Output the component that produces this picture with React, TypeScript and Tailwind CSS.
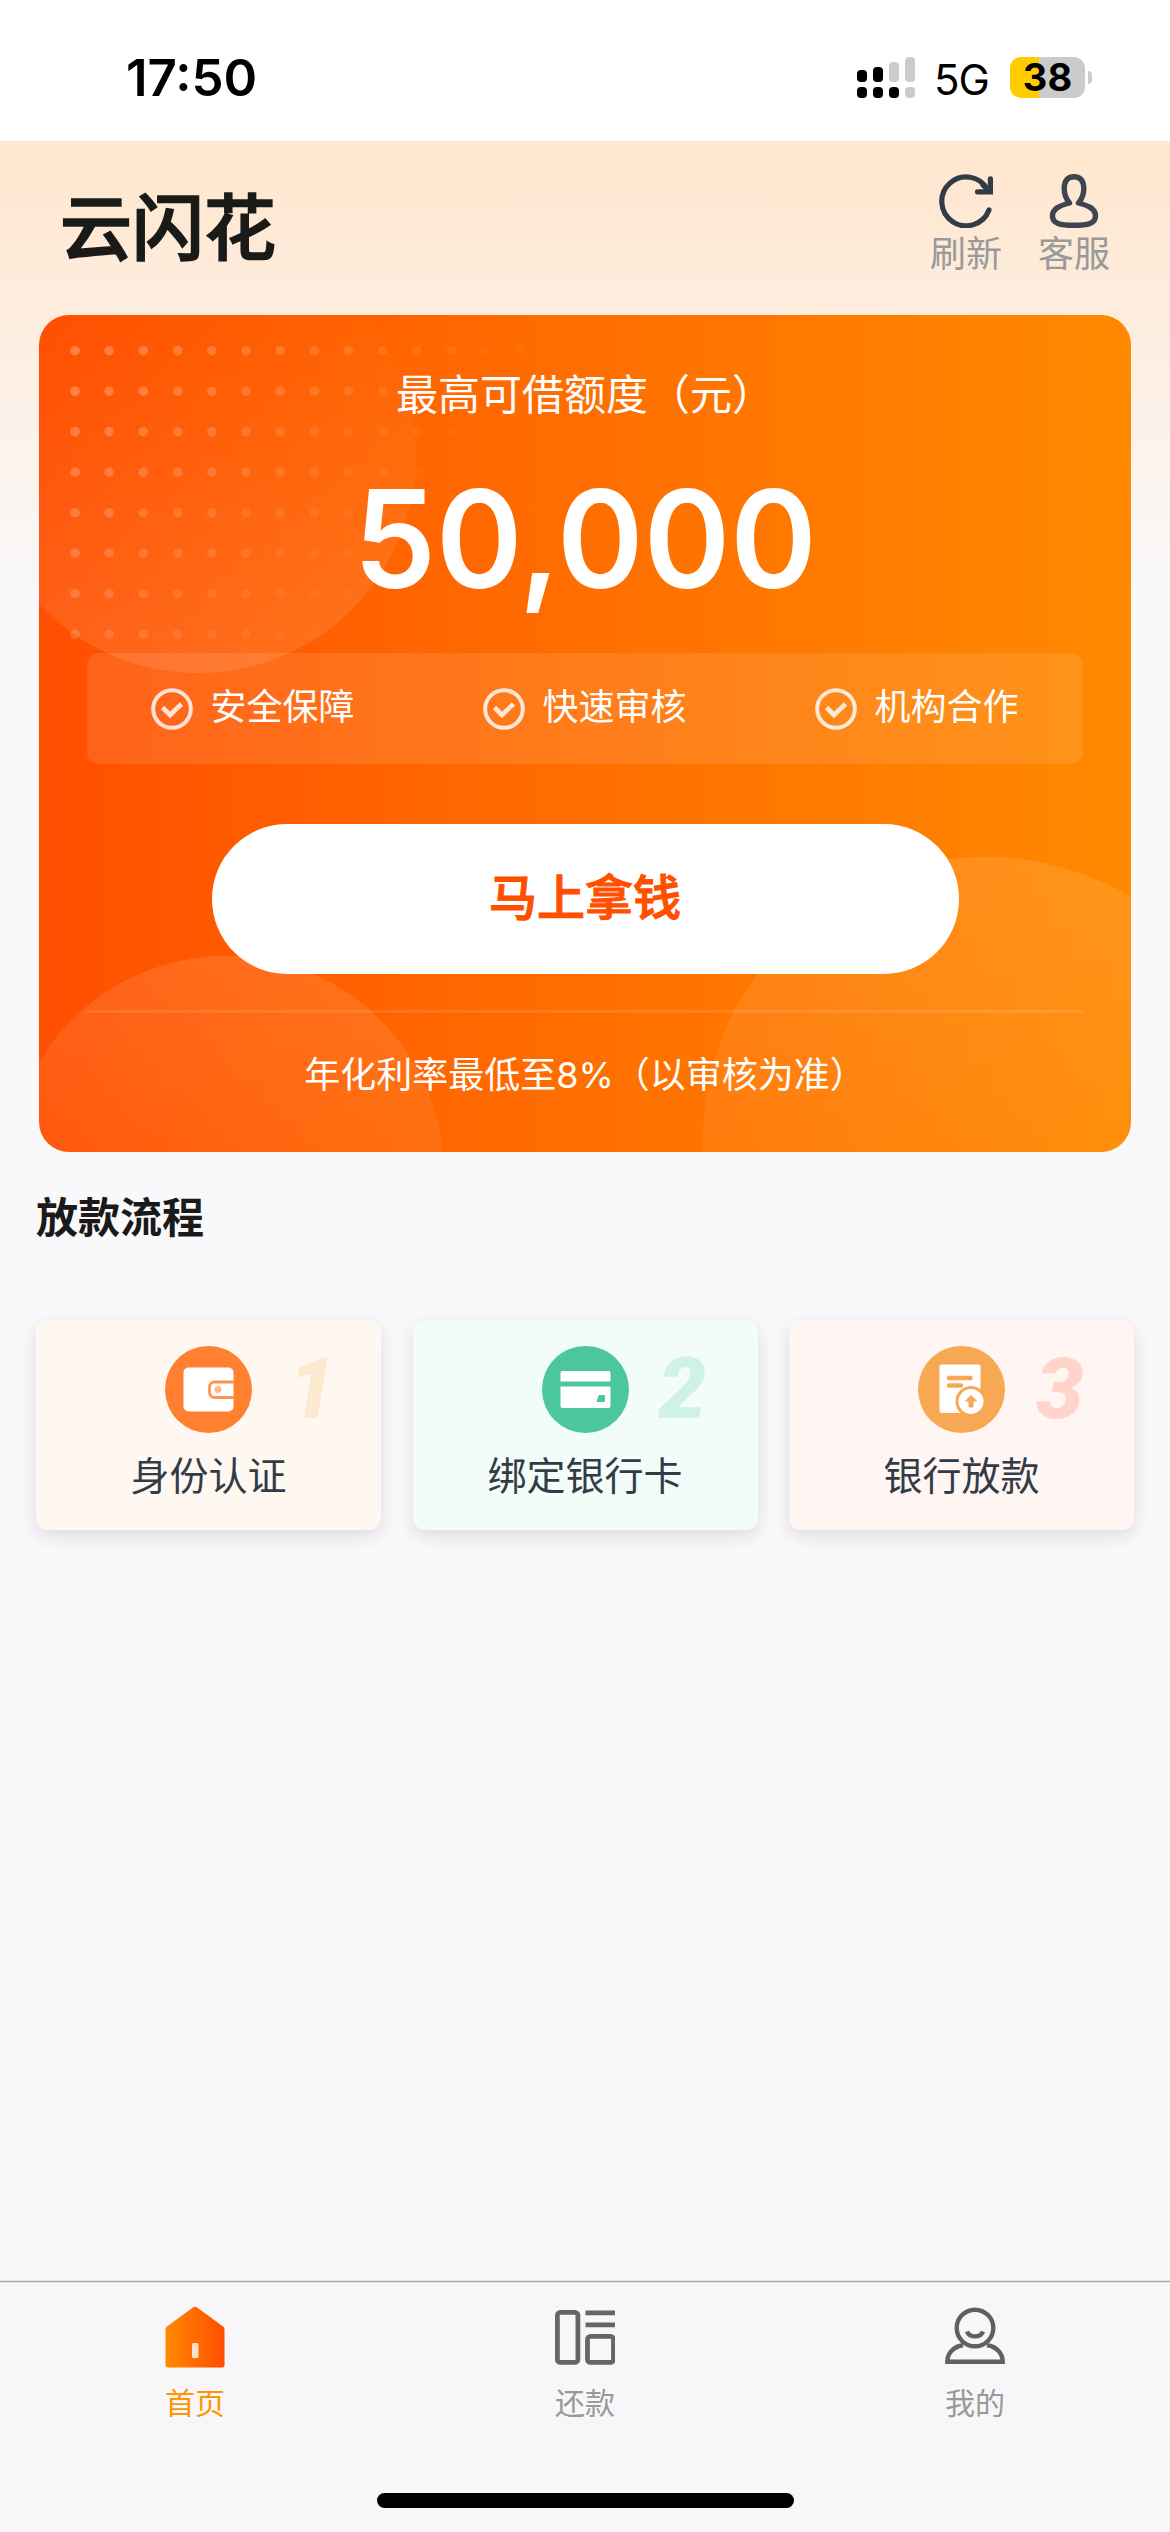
import type { ComponentType } from "react";

interface IconProps {
    className?: string;
}

function SignalIcon({ className }: IconProps) {
    return (
        <svg viewBox="0 0 58 41" className={className}>
            <g fill="#000">
                <rect x="0" y="13" width="10" height="12" rx="4" />
                <rect x="16" y="10" width="10" height="15" rx="4" />
                <rect x="0" y="30" width="10" height="11" rx="4" />
                <rect x="16" y="30" width="10" height="11" rx="4" />
                <rect x="32" y="30" width="10" height="11" rx="4" />
            </g>
            <g fill="#cbcbcb">
                <rect x="32" y="5" width="10" height="20" rx="4" />
                <rect x="48" y="0" width="10" height="25" rx="4" />
                <rect x="48" y="30" width="10" height="11" rx="4" />
            </g>
        </svg>
    );
}

function RefreshIcon({ className }: IconProps) {
    return (
        <svg viewBox="0 0 54 54" fill="none" stroke="#323c47" strokeWidth="5.2" strokeLinecap="round" className={className}>
            <path d="M50 36A24.4 24.4 0 1 1 48.5 15.5" />
            <path d="M38.5 17.8H51.4V4.8" />
            <path d="M44 11l7 6.500" />
        </svg>
    );
}

function ServiceIcon({ className }: IconProps) {
    return (
        <svg viewBox="0 0 54 54" fill="none" stroke="#3d4650" strokeWidth="5.4" strokeLinejoin="round" className={className}>
            <path d="M22.500 29C19 25 17.200 20 17.200 14.500C17.200 7 20.500 2.700 27 2.700C33.500 2.700 36.800 7 36.800 14.500C36.800 20 35 25 31.500 29C41 31.500 48.500 34.500 48.500 42C48.500 49.500 41 51.300 27 51.300C13 51.300 5.500 49.500 5.500 42C5.500 34.500 13 31.500 22.500 29Z" />
        </svg>
    );
}

function CheckIcon({ className }: IconProps) {
    return (
        <svg viewBox="0 0 42 42" fill="none" stroke="#fff" strokeOpacity="0.82" className={className}>
            <circle cx="21" cy="21" r="18.8" strokeWidth="4" />
            <path d="M11.500 19.500l7.500 7.500L30.500 16" strokeWidth="4.6" />
        </svg>
    );
}

function WalletIcon({ className }: IconProps) {
    return (
        <svg viewBox="0 0 87 87" className={className}>
            <circle cx="43.5" cy="43.5" r="43.5" fill="#ff8030" />
            <rect x="18.500" y="21.500" width="50" height="44" rx="5" fill="#fff" />
            <path d="M69 36H49.500a5 5 0 0 0-5 5v5.500a5 5 0 0 0 5 5H69" fill="none" stroke="#ff9350" strokeWidth="2.800" />
            <circle cx="53" cy="43.500" r="3.500" fill="#ffb78b" />
        </svg>
    );
}

function BankCardIcon({ className }: IconProps) {
    return (
        <svg viewBox="0 0 87 87" className={className}>
            <circle cx="43.5" cy="43.5" r="43.5" fill="#4bc69e" />
            <path d="M20.500 25h46a2 2 0 0 1 2 2v8.500h-50V27a2 2 0 0 1 2-2z" fill="#fff" />
            <path d="M18.500 40.500h50V60a2 2 0 0 1-2 2h-46a2 2 0 0 1-2-2z" fill="#fff" />
            <path d="M57 49.500H62.500V55.500H55z" fill="#4bc69e" stroke="#4bc69e" strokeLinejoin="round" />
        </svg>
    );
}

function LoanIcon({ className }: IconProps) {
    return (
        <svg viewBox="0 0 87 87" className={className}>
            <circle cx="43.5" cy="43.5" r="43.5" fill="#f6a952" />
            <rect x="21.500" y="18.500" width="41" height="48.500" rx="2" fill="#fff" />
            <path d="M31 32h21.500M31 39.500h12" stroke="#f6a952" strokeWidth="4.500" strokeLinecap="round" />
            <circle cx="53" cy="55.500" r="15.500" fill="#f6a952" />
            <circle cx="53" cy="55.500" r="12.500" fill="#fff" />
            <path d="M53 49.500l5.500 5.500H55v6h-4v-6h-3.500z" fill="#f6a952" stroke="#f6a952" strokeLinejoin="round" />
        </svg>
    );
}

function HomeIcon({ className }: IconProps) {
    return (
        <svg viewBox="0 0 60 62" className={className}>
            <defs>
                <linearGradient id="home-fill" x1="0" x2="1">
                    <stop offset="0" stopColor="#ff8a00" />
                    <stop offset="1" stopColor="#ff4e00" />
                </linearGradient>
            </defs>
            <path d="M27.500 1.800a4 4 0 0 1 5 0L58 20.500a4 4 0 0 1 1.500 3V59a2.500 2.500 0 0 1-2.500 2.500H3A2.500 2.500 0 0 1 .5 59V23.500a4 4 0 0 1 1.500-3z" fill="url(#home-fill)" />
            <rect x="27" y="37" width="6.500" height="15" rx="1.500" fill="#ffe0c8" />
        </svg>
    );
}

function RepayIcon({ className }: IconProps) {
    return (
        <svg viewBox="0 0 60 54" fill="none" stroke="#666" strokeWidth="4.8" className={className}>
            <rect x="2.400" y="2.400" width="20.500" height="50" rx="3" />
            <rect x="32.500" y="26.400" width="26" height="26" rx="3" />
            <path d="M30.500 2.800h29.500M30.500 14.800h29.500" />
        </svg>
    );
}

function MineIcon({ className }: IconProps) {
    return (
        <svg viewBox="0 0 60 58" fill="none" stroke="#606060" strokeWidth="4.400" className={className}>
            <circle cx="30" cy="20" r="18.300" />
            <path d="M22 23.500c2.500 6.500 13.500 6.500 16 0" />
            <path d="M18 37.300C8 38.500 2.300 46 2.300 53.800H57.700C57.700 46 52 38.500 42 37.300" />
        </svg>
    );
}

/* Dot grid and soft circles behind the quota card content */
function CardPattern() {
    const rows = Array.from({ length: 8 }, (_, i) => i);
    const cols = Array.from({ length: 15 }, (_, i) => i);

    return (
        <svg viewBox="0 0 1092 837" className="absolute inset-0 w-full h-full">
            <defs>
                <linearGradient id="circle-top" x1="0" y1="0" x2="0" y2="1">
                    <stop offset="0.15" stopColor="#fff" stopOpacity="0" />
                    <stop offset="1" stopColor="#fff" stopOpacity="0.11" />
                </linearGradient>
                <linearGradient id="circle-bottom" x1="0" y1="0" x2="0" y2="1">
                    <stop offset="0" stopColor="#fff" stopOpacity="0.11" />
                    <stop offset="0.6" stopColor="#fff" stopOpacity="0.04" />
                </linearGradient>
            </defs>
            <circle cx="159" cy="140" r="218" fill="url(#circle-top)" />
            <circle cx="187" cy="859" r="218" fill="url(#circle-bottom)" />
            <circle cx="947" cy="825" r="283" fill="url(#circle-bottom)" />
            {rows.map((r) =>
                cols.map((c) => (
                    <circle
                        key={`${r}-${c}`}
                        cx={36 + c * 34.2}
                        cy={35.7 + r * 40.5}
                        r="4.8"
                        fill="#fff"
                        fillOpacity={Math.max(0, 0.27 - c * 0.0185 - r * 0.0165)}
                    />
                ))
            )}
        </svg>
    );
}

function StatusBar() {
    return (
        <div className="h-[141px] shrink-0 bg-white flex items-start justify-between pl-[126px] pr-[78px]">
            <span className="mt-[47px] text-[51px] leading-[62px] font-semibold text-black">17:50</span>
            <div className="mt-[57px] h-[41px] flex items-center">
                <SignalIcon className="w-[58px] h-[41px]" />
                <span className="ml-[19px] mt-[3px] w-[57px] text-[42px] leading-[41px] tracking-[-1px] text-black">5G</span>
                <div className="ml-[19px] w-[75px] h-[41px] rounded-[11px] bg-[linear-gradient(90deg,#ffcc00_29px,#cbcbcb_29px)] flex items-center justify-center text-[38px] leading-[41px] font-bold text-black">
                    38
                </div>
                <div className="ml-[3px] w-1 h-[13px] rounded-r-full bg-[#cbcbcb]" />
            </div>
        </div>
    );
}

function HeaderAction({ icon: Icon, label }: { icon: ComponentType<IconProps>; label: string }) {
    return (
        <div className="flex flex-col items-center">
            <Icon className="w-[54px] h-[54px] shrink-0" />
            <span className="text-[36px] leading-[52px]  text-[#999]">{label}</span>
        </div>
    );
}

function QuotaCard() {
    const features = ["安全保障", "快速审核", "机构合作"];

    return (
        <div className="relative w-[1092px] h-[837px] shrink-0 mx-auto mt-[35px] rounded-[30px] overflow-hidden bg-linear-to-r from-[#ff4e00] to-[#ff8900] text-white">
            <CardPattern />
            <div className="relative px-12 flex flex-col items-center">
                <div className="mt-[50px] text-[42px] leading-[60px]">最高可借额度（元）</div>
                <div className="mt-[34px] text-[136px] leading-[160px] font-semibold scale-x-[0.965]">50,000</div>

                {/* Features */}
                <div className="mt-[34px] w-full h-[111px] rounded-xl bg-white/10 grid grid-cols-3">
                    {features.map((name) => (
                        <div key={name} className="flex items-center justify-center gap-[17px]">
                            <CheckIcon className="w-[42px] h-[42px]" />
                            <span className="text-[36px] leading-[52px] pb-[3px]">{name}</span>
                        </div>
                    ))}
                </div>

                <button className="mt-[60px] pb-[3px] w-[747px] h-[150px] rounded-full bg-white text-[#ff5000] text-[48px] leading-none font-medium [-webkit-text-stroke:1.2px_#ff5000]">
                    马上拿钱
                </button>
                <div className="mt-9 w-full h-[3px] bg-white/10" />
                <div className="mt-9 text-[36px] leading-[52px]">年化利率最低至8%（以审核为准）</div>
            </div>
        </div>
    );
}

interface StepCardProps {
    icon: ComponentType<IconProps>;
    label: string;
    number: string;
    cardClass: string;
    numberClass: string;
}

function StepCard({ icon: Icon, label, number, cardClass, numberClass }: StepCardProps) {
    return (
        <div className={`relative w-[345px] h-[210px] rounded-xl shadow-[0_6px_18px_rgba(0,0,0,0.12)] flex flex-col items-center ${cardClass}`}>
            <Icon className="mt-[26px] w-[87px] h-[87px]" />
            <span className="mt-[15px] text-[39px] leading-[56px] text-[#323c47]">{label}</span>
            <span className={`absolute top-[49px] text-[85px] leading-[40px] font-black italic font-[Roboto] ${numberClass}`}>
                {number}
            </span>
        </div>
    );
}

function TabItem({ icon: Icon, label, active }: { icon: ComponentType<IconProps>; label: string; active?: boolean }) {
    return (
        <div className="flex flex-col items-center">
            <div className="mt-[23px] h-[63px] flex items-center">
                <Icon className="w-[60px] h-[62px]" />
            </div>
            <span className={`mt-[13px] text-[30px] leading-[44px] ${active ? "text-[#ff9500]" : "text-[#999]"}`}>{label}</span>
        </div>
    );
}

export default function App() {
    return (
        <div className="w-[1170px] h-[2532px] overflow-hidden flex flex-col bg-[#f9f9fb] font-['Inter','Noto_Sans_CJK_SC',sans-serif]">
            <StatusBar />

            <main className="flex-1 flex flex-col bg-[linear-gradient(180deg,#ffe6cd_0px,#fdeddf_180px,#f9f9fb_460px)]">
                <header className="h-[139px] shrink-0 flex justify-between pl-[60px] pr-[60px]">
                    <h1 className="mt-[37px] text-[72px] leading-[100px] font-medium [-webkit-text-stroke:1.6px_#1a1a18] text-[#1a1a18]">
                        云闪花
                    </h1>
                    <div className="mt-[33px] flex gap-9">
                        <HeaderAction icon={RefreshIcon} label="刷新" />
                        <HeaderAction icon={ServiceIcon} label="客服" />
                    </div>
                </header>

                <QuotaCard />

                {/* Loan steps */}
                <h2 className="mt-9 pl-9 text-[42px] leading-[60px] font-bold text-[#1a1a1a]">放款流程</h2>
                <div className="mt-[72px] px-9 flex justify-between">
                    <StepCard icon={WalletIcon} label="身份认证" number="1" cardClass="bg-[#fff8f1]" numberClass="left-[252px] text-[#fce9d0]" />
                    <StepCard icon={BankCardIcon} label="绑定银行卡" number="2" cardClass="bg-[#f2fcf8]" numberClass="left-[246px] text-[#d0f1e6]" />
                    <StepCard icon={LoanIcon} label="银行放款" number="3" cardClass="bg-[#fff5f2]" numberClass="left-[247px] text-[#ffd5ca]" />
                </div>
            </main>

            <nav className="h-[251px] shrink-0 border-t border-[#a5a5a7] shadow-[0_-1px_0_#e4e4e6,inset_0_1px_0_#e4e4e6] bg-[#f7f7f9] flex flex-col items-center">
                <div className="w-full grid grid-cols-3">
                    <TabItem icon={HomeIcon} label="首页" active />
                    <TabItem icon={RepayIcon} label="还款" />
                    <TabItem icon={MineIcon} label="我的" />
                </div>
                <div className="mt-auto mb-6 w-[417px] h-[15px] rounded-full bg-black" />
            </nav>
        </div>
    );
}
